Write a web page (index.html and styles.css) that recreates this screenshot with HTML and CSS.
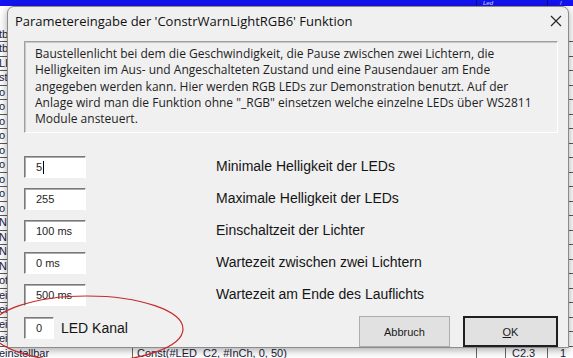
FILE: index.html
```html
<!DOCTYPE html>
<html lang="de">
<head>
    <meta charset="UTF-8">
    <title>Parametereingabe</title>
    <link rel="stylesheet" href="styles.css">
</head>
<body>
    <!-- Excel sheet behind the dialog -->
    <div class="sheet">
        <div class="sheet-top">
            <span class="top-cell top-a"></span>
            <span class="top-cell top-b"><i>Led</i></span>
            <span class="top-cell top-c">/</span>
        </div>
        <div class="sheet-gap"></div>
        <div class="row"><span class="c1">tb</span><span class="c2"></span><span class="c3"></span><span class="c4"></span><span class="c5"></span></div>
        <div class="row"><span class="c1">tb</span><span class="c2"></span><span class="c3"></span><span class="c4"></span><span class="c5"></span></div>
        <div class="row"><span class="c1">LI</span><span class="c2"></span><span class="c3"></span><span class="c4"></span><span class="c5"></span></div>
        <div class="row"><span class="c1">st</span><span class="c2"></span><span class="c3"></span><span class="c4"></span><span class="c5"></span></div>
        <div class="row"><span class="c1">o</span><span class="c2"></span><span class="c3"></span><span class="c4"></span><span class="c5"></span></div>
        <div class="row"><span class="c1">o</span><span class="c2"></span><span class="c3"></span><span class="c4"></span><span class="c5"></span></div>
        <div class="row"><span class="c1">o</span><span class="c2"></span><span class="c3"></span><span class="c4"></span><span class="c5"></span></div>
        <div class="row"><span class="c1">o</span><span class="c2"></span><span class="c3"></span><span class="c4"></span><span class="c5"></span></div>
        <div class="row"><span class="c1">o</span><span class="c2"></span><span class="c3"></span><span class="c4"></span><span class="c5"></span></div>
        <div class="row"><span class="c1">o</span><span class="c2"></span><span class="c3"></span><span class="c4"></span><span class="c5"></span></div>
        <div class="row"><span class="c1">o</span><span class="c2"></span><span class="c3"></span><span class="c4"></span><span class="c5"></span></div>
        <div class="row"><span class="c1">o</span><span class="c2"></span><span class="c3"></span><span class="c4"></span><span class="c5"></span></div>
        <div class="row"><span class="c1">o</span><span class="c2"></span><span class="c3"></span><span class="c4"></span><span class="c5"></span></div>
        <div class="row"><span class="c1">Ni</span><span class="c2"></span><span class="c3"></span><span class="c4"></span><span class="c5"></span></div>
        <div class="row"><span class="c1">Ni</span><span class="c2"></span><span class="c3"></span><span class="c4"></span><span class="c5"></span></div>
        <div class="row"><span class="c1">Ni</span><span class="c2"></span><span class="c3"></span><span class="c4"></span><span class="c5"></span></div>
        <div class="row"><span class="c1">Ni</span><span class="c2"></span><span class="c3"></span><span class="c4"></span><span class="c5"></span></div>
        <div class="row"><span class="c1">ot</span><span class="c2"></span><span class="c3"></span><span class="c4"></span><span class="c5"></span></div>
        <div class="row"><span class="c1">ei</span><span class="c2"></span><span class="c3"></span><span class="c4"></span><span class="c5"></span></div>
        <div class="row"><span class="c1">ei</span><span class="c2"></span><span class="c3"></span><span class="c4"></span><span class="c5"></span></div>
        <div class="row"><span class="c1">ei</span><span class="c2"></span><span class="c3"></span><span class="c4"></span><span class="c5"></span></div>
        <div class="row"><span class="c1">ei</span><span class="c2"></span><span class="c3"></span><span class="c4"></span><span class="c5"></span></div>
        <div class="row"><span class="c1">einstellbar</span><span class="c2">Const(#LED_C2, #InCh, 0, 50)</span><span class="c3"></span><span class="c4">C2.3</span><span class="c5">1</span></div>
    </div>

    <!-- Dialog window -->
    <div class="dialog">
        <div class="titlebar">
            <span class="title">Parametereingabe der 'ConstrWarnLightRGB6' Funktion</span>
            <svg class="close" width="12" height="12" viewBox="0 0 12 12">
                <path d="M1 1 L11 11 M11 1 L1 11" stroke="#222" stroke-width="1.1" fill="none"/>
            </svg>
        </div>
        <div class="content">
            <div class="description">
                Baustellenlicht bei dem die Geschwindigkeit, die Pause zwischen zwei Lichtern, die<br>
                Helligkeiten im Aus- und Angeschalteten Zustand und eine Pausendauer am Ende<br>
                angegeben werden kann. Hier werden RGB LEDs zur Demonstration benutzt. Auf der<br>
                Anlage wird man die Funktion ohne "_RGB" einsetzen welche einzelne LEDs über WS2811<br>
                Module ansteuert.
            </div>

            <div class="params">
                <div class="param">
                    <div class="field">5<span class="caret"></span></div>
                    <div class="param-label">Minimale Helligkeit der LEDs</div>
                </div>
                <div class="param">
                    <div class="field">255</div>
                    <div class="param-label">Maximale Helligkeit der LEDs</div>
                </div>
                <div class="param">
                    <div class="field">100 ms</div>
                    <div class="param-label">Einschaltzeit der Lichter</div>
                </div>
                <div class="param">
                    <div class="field">0 ms</div>
                    <div class="param-label">Wartezeit zwischen zwei Lichtern</div>
                </div>
                <div class="param">
                    <div class="field">500 ms</div>
                    <div class="param-label">Wartezeit am Ende des Lauflichts</div>
                </div>
            </div>

            <div class="footer">
                <div class="channel">
                    <div class="field field-small">0</div>
                    <div class="channel-label">LED Kanal</div>
                </div>
                <div class="buttons">
                    <button class="btn">Abbruch</button>
                    <button class="btn btn-default"><u>O</u>K</button>
                </div>
            </div>
        </div>
    </div>

    <!-- red marker drawn over the screenshot -->
    <svg class="marker" width="573" height="358" viewBox="0 0 573 358">
        <ellipse cx="87" cy="329" rx="96" ry="33" fill="none" stroke="#c62a2a" stroke-width="1.2"/>
    </svg>
</body>
</html>
```

FILE: styles.css
```css
/* Page */
body {
    margin: 0;
    width: 573px;
    height: 358px;
    overflow: hidden;
    position: relative;
    background-color: #fff;
    font-family: 'Liberation Sans', Arial, sans-serif;
}

/* Spreadsheet behind the dialog */
.sheet {
    display: flex;
    flex-direction: column;
    font-size: 11px;
    color: #1b1b3a;
}

.sheet-top {
    height: 6px;
    background-color: #1414f2;
    display: grid;
    grid-template-columns: 477px 71px 25px;
    overflow: hidden;
}

.top-cell {
    border-right: 1px solid #10106a;
    color: #dfe3ff;
    line-height: 6px;
    font-size: 6px;
}

.top-b {
    padding-left: 6px;
}

.top-c {
    border-right: none;
    padding-left: 12px;
}

.sheet-gap {
    height: 21.75px;
}

.row {
    height: 14.5px;
    display: grid;
    grid-template-columns: 133px 344px 29px 42px 25px;
    box-sizing: border-box;
    border-bottom: 1px solid #5a5a5a;
    line-height: 13px;
    white-space: nowrap;
}

.row span {
    overflow: hidden;
    border-right: 1px solid #6a6a6a;
}

.c1 {
    text-indent: -1px;
}

.c2 {
    padding-left: 4px;
}

.c4 {
    padding-left: 6px;
}

.c5 {
    padding-left: 12px;
    border-right: none !important;
}

/* Dialog window */
.dialog {
    position: absolute;
    left: 7px;
    top: 6px;
    width: 562px;
    height: 342px;
    box-sizing: border-box;
    background-color: #f0f0f0;
    border: 1px solid #8c8c8c;
    border-radius: 7px 7px 0 0;
    box-shadow: 0 2px 8px rgba(0, 0, 0, 0.35);
    display: flex;
    flex-direction: column;
    color: #1a1a1a;
}

.titlebar {
    height: 29px;
    display: flex;
    align-items: center;
    justify-content: space-between;
    padding: 0 6px 0 7px;
}

.title {
    font-family: 'Open Sans', 'Liberation Sans', sans-serif;
    font-size: 13px;
    color: #111;
}

.close {
    display: block;
}

.content {
    padding: 6px 10px 0 16px;
    display: flex;
    flex-direction: column;
}

/* Description box */
.description {
    height: 92px;
    box-sizing: border-box;
    border: 1px solid;
    border-color: #a0a0a0 #ffffff #ffffff #a0a0a0;
    box-shadow: inset 1px 1px 0 #c8c8c8;
    padding: 4px 10px 0 10px;
    font-family: 'Open Sans', 'Liberation Sans', sans-serif;
    font-size: 12px;
    line-height: 16.3px;
    white-space: nowrap;
    color: #1e1e1e;
}

/* Parameter rows */
.params {
    margin-top: 23px;
    display: flex;
    flex-direction: column;
    gap: 10px;
}

.param {
    display: flex;
    align-items: center;
}

.field {
    width: 62px;
    height: 22px;
    box-sizing: border-box;
    background-color: #fff;
    border: 1px solid;
    border-color: #7a7a7a #ffffff #ffffff #7a7a7a;
    box-shadow: inset 1px 1px 0 #a9a9a9;
    padding-left: 11px;
    font-size: 11px;
    line-height: 20px;
    color: #1e1e1e;
    display: flex;
    align-items: center;
}

.caret {
    display: inline-block;
    width: 1px;
    height: 13px;
    margin-left: 1px;
    background-color: #000;
}

.param-label {
    margin-left: 130px;
    font-size: 14px;
    margin-top: -3px;
    color: #151515;
}

/* Footer: channel + buttons */
.footer {
    margin-top: 10px;
    display: flex;
    justify-content: space-between;
}

.channel {
    display: flex;
    align-items: center;
    height: 22px;
    margin-top: 1px;
}

.field-small {
    width: 30px;
}

.channel-label {
    margin-left: 7px;
    font-size: 14px;
    color: #151515;
}

.buttons {
    display: flex;
    gap: 13px;
}

.btn {
    width: 91px;
    height: 31px;
    margin: 0;
    font-family: 'Liberation Sans', Arial, sans-serif;
    font-size: 11px;
    color: #1a1a1a;
    background-color: #e1e1e1;
    border: 1px solid #adadad;
}

.btn-default {
    width: 95px;
    border: 2px solid #1f1f1f;
}

/* Red marker */
.marker {
    position: absolute;
    left: 0;
    top: 0;
    pointer-events: none;
}
```
